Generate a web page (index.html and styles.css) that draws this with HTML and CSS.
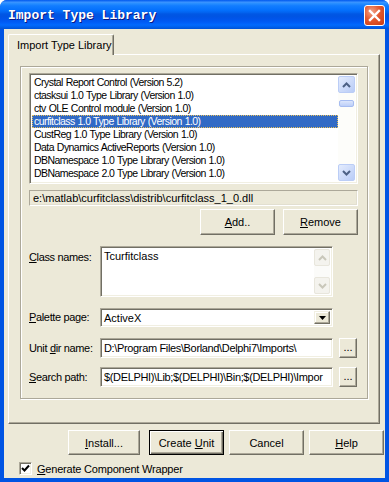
FILE: index.html
```html
<!doctype html>
<html lang="en">
<head>
<meta charset="utf-8">
<title>Import Type Library</title>
<link rel="stylesheet" href="styles.css">
</head>
<body>

<div class="window">

	<div class="titlebar">
		<span class="title">Import Type Library</span>
		<span class="close">
			<svg width="13" height="13" viewBox="0 0 13 13"><path d="M2 2 L11 11 M11 2 L2 11" stroke="#fff" stroke-width="2.4" stroke-linecap="square" /></svg>
		</span>
	</div>

	<div class="client">

		<div class="tabs">
			<div class="tab">Import Type Library</div>
		</div>

		<div class="page">
			<div class="group">

				<div class="list">
					<div class="items">
						<div class="item">Crystal Report Control (Version 5.2)</div>
						<div class="item">ctasksui 1.0 Type Library (Version 1.0)</div>
						<div class="item">ctv OLE Control module (Version 1.0)</div>
						<div class="item selected">curfitclass 1.0 Type Library (Version 1.0)</div>
						<div class="item">CustReg 1.0 Type Library (Version 1.0)</div>
						<div class="item">Data Dynamics ActiveReports (Version 1.0)</div>
						<div class="item">DBNamespace 1.0 Type Library (Version 1.0)</div>
						<div class="item">DBNamespace 2.0 Type Library (Version 1.0)</div>
						<div class="item">DBNamespace 3.0 Type Library (Version 1.0)</div>
					</div>
					<div class="vscroll">
						<div class="sbtn">
							<svg width="9" height="6" viewBox="0 0 9 6"><path d="M1 5 L4.5 1.5 L8 5" fill="none" stroke="#4D6185" stroke-width="2" /></svg>
						</div>
						<div class="track"><div class="thumb"></div></div>
						<div class="sbtn">
							<svg width="9" height="6" viewBox="0 0 9 6"><path d="M1 1 L4.5 4.5 L8 1" fill="none" stroke="#4D6185" stroke-width="2" /></svg>
						</div>
					</div>
				</div>

				<div class="pathbox">e:\matlab\curfitclass\distrib\curfitclass_1_0.dll</div>

				<div class="btnrow">
					<div class="btn"><span><u>A</u>dd..</span></div>
					<div class="btn"><span><u>R</u>emove</span></div>
				</div>

				<div class="row row-memo">
					<div class="lbl"><u>C</u>lass names:</div>
					<div class="memo">
						<div class="memo-text">Tcurfitclass</div>
						<div class="vscroll off">
							<div class="sbtn">
								<svg width="9" height="6" viewBox="0 0 9 6"><path d="M1 5 L4.5 1.5 L8 5" fill="none" stroke="#C9C7BA" stroke-width="2" /></svg>
							</div>
							<div class="track"></div>
							<div class="sbtn">
								<svg width="9" height="6" viewBox="0 0 9 6"><path d="M1 1 L4.5 4.5 L8 1" fill="none" stroke="#C9C7BA" stroke-width="2" /></svg>
							</div>
						</div>
					</div>
				</div>

				<div class="row row-combo">
					<div class="lbl"><u>P</u>alette page:</div>
					<div class="combo">
						<div class="combo-text">ActiveX</div>
						<div class="combo-btn">
							<svg width="7" height="4" viewBox="0 0 7 4"><path d="M0 0 H7 L3.5 4 Z" fill="#000" /></svg>
						</div>
					</div>
				</div>

				<div class="row row-edit">
					<div class="lbl">Unit <u>d</u>ir name:</div>
					<div class="edit">D:\Program Files\Borland\Delphi7\Imports\</div>
					<div class="btn dots">...</div>
				</div>

				<div class="row row-edit row-last">
					<div class="lbl"><u>S</u>earch path:</div>
					<div class="edit">$(DELPHI)\Lib;$(DELPHI)\Bin;$(DELPHI)\Impor</div>
					<div class="btn dots">...</div>
				</div>

			</div>
		</div>

		<div class="footer">
			<div class="btn btn-install"><span><u>I</u>nstall...</span></div>
			<div class="btn default"><span>Create <u>U</u>nit</span></div>
			<div class="btn"><span>Cancel</span></div>
			<div class="btn"><span><u>H</u>elp</span></div>
		</div>

		<div class="check">
			<span class="box">
				<svg width="9" height="9" viewBox="0 0 9 9"><path d="M1 4 L3.5 6.5 L8 1.5" fill="none" stroke="#000" stroke-width="2" /></svg>
			</span>
			<span class="check-text"><u>G</u>enerate Component Wrapper</span>
		</div>

	</div>

</div>

</body>
</html>
```

FILE: styles.css
```css
* { box-sizing: border-box; }

body { margin: 0; background: #fff; font: 11px "Liberation Sans", Arial, sans-serif; color: #000; }

u { text-decoration: underline; text-underline-offset: 1px; }

.window { width: 389px; height: 482px; display: flex; flex-direction: column;
	background: #0054E3; border-radius: 7px 7px 0 0; overflow: hidden; }

/* title bar */

.titlebar { height: 29px; flex: none; display: flex; align-items: center; justify-content: space-between;
	padding: 0 4px 0 8px;
	background: linear-gradient( to bottom, #0058EE 0%, #3A93FF 8%, #288EFF 12%, #127DFF 20%, #036FFC 36%,
		#0262EE 44%, #0057E5 48%, #0054E3 56%, #0055EB 66%, #005BF5 76%, #026AFE 86%, #0062EF 92%, #0052D6 100% ); }

.title { font: bold 13px "Liberation Mono", "Courier New", monospace; color: #fff; text-shadow: 1px 1px #0A1883;
	padding-top: 1px; }

.close { width: 21px; height: 21px; border: 1px solid #fff; border-radius: 3px; display: flex;
	align-items: center; justify-content: center; margin-top: 1px;
	background: radial-gradient( circle at 35% 30%, #F2A48A 0%, #E2582F 45%, #C83A12 100% ); }

/* client area */

.client { flex: 1; margin: 0 4px 4px; background: #ECE9D8; padding: 5px 0 0 4px;
	display: flex; flex-direction: column; }

.tabs { display: flex; height: 20px; position: relative; z-index: 1; }

.tab { width: 106px; height: 21px; padding: 4px 0 0 8px; background: #ECE9D8;
	border-top: 1px solid #fff; border-left: 1px solid #fff; border-right: 1px solid #716F64;
	box-shadow: inset -1px 0 #ACA899; border-radius: 2px 2px 0 0; }

.page { width: 372px; height: 370px; border: 1px solid; border-color: #fff #716F64 #716F64 #fff;
	box-shadow: inset -1px -1px #ACA899; padding: 11px 0 0 11px; }

.group { width: 348px; height: 333px; border: 1px solid #ACA899; box-shadow: inset 1px 1px #fff, 1px 1px #fff;
	padding: 6px 0 0 8px; display: flex; flex-direction: column; }

/* sunken 3d edge */

.list, .memo, .combo, .edit { border: 1px solid; border-color: #ACA899 #fff #fff #ACA899;
	box-shadow: inset 1px 1px #716F64, inset -1px -1px #F1EFE2; background: #fff; }

.list { width: 329px; height: 111px; padding: 2px 2px 2px 2px; display: flex; overflow: hidden; }

.items { flex: 1; overflow: hidden; }

.item { height: 13px; line-height: 13px; padding-left: 2px; white-space: nowrap;
	font-size: 10.5px; letter-spacing: -0.55px; word-spacing: 0.5px; }

.item.selected { background: #316AC5; color: #fff; outline: 1px dotted #E8C05A; outline-offset: -1px; }

.vscroll { width: 17px; flex: none; display: flex; flex-direction: column; background: #FDFDFA; }

.sbtn { height: 17px; flex: none; display: flex; align-items: center; justify-content: center;
	border: 1px solid #BBCDF6; border-radius: 2px; background: linear-gradient( to bottom right, #E4ECFD, #B9CCF7 ); }

.track { flex: 1; padding-top: 7px; }

.thumb { height: 7px; margin: 0 1px; border: 1px solid #A6BCF1; border-radius: 2px;
	background: linear-gradient( to bottom, #DCE6FC, #BCCEF8 ); }

.vscroll.off { background: #FBFBF9; }
.vscroll.off .sbtn { border-color: #E8E6DC; background: #F4F3EE; }

.pathbox { width: 329px; height: 16px; margin-top: 6px; padding: 1px 0 0 3px; white-space: nowrap;
	border: 1px solid; border-color: #ACA899 #fff #fff #ACA899; box-shadow: inset -1px -1px #E2DFD0; }

/* buttons */

.btn { height: 25px; display: flex; align-items: center; justify-content: center; background: #ECE9D8;
	border: 1px solid; border-color: #fff #716F64 #716F64 #fff; box-shadow: inset -1px -1px #ACA899;
	white-space: nowrap; }

.btn.default { border-color: #000; box-shadow: inset 1px 1px #fff, inset -1px -1px #716F64, inset -2px -2px #ACA899; }

.btnrow { width: 329px; display: flex; justify-content: flex-end; gap: 8px; margin-top: 3px; }
.btnrow .btn { width: 75px; height: 26px; }

/* label rows */

.row { display: flex; margin-top: 11px; }

.lbl { width: 71px; flex: none; letter-spacing: -0.35px; white-space: nowrap; }

.row-memo .lbl { padding-top: 5px; }
.row-combo .lbl { padding-top: 3px; }
.row-edit .lbl { padding-top: 4px; }
.row-last { margin-top: 9px; }

.memo { width: 233px; height: 51px; display: flex; padding: 2px; }
.memo-text { flex: 1; padding: 1px 0 0 1px; }
.memo .vscroll { width: 16px; }

.combo { width: 233px; height: 19px; display: flex; padding: 2px; }
.combo-text { flex: 1; padding-left: 1px; line-height: 14px; }
.combo-btn { width: 16px; display: flex; align-items: center; justify-content: center; background: #ECE9D8;
	border: 1px solid; border-color: #F1EFE2 #716F64 #716F64 #F1EFE2; box-shadow: inset -1px -1px #ACA899, inset 1px 1px #fff; }

.edit { width: 233px; height: 20px; padding: 3px 0 0 3px; white-space: nowrap; overflow: hidden;
	letter-spacing: -0.35px; }

.btn.dots { width: 18px; height: 20px; margin-left: 6px; align-items: flex-end; padding-bottom: 4px; }

/* footer */

.footer { display: flex; justify-content: flex-end; gap: 5px; margin-top: 6px; width: 376px; }
.footer .btn { width: 75px; }
.footer .btn-install { width: 72px; margin-right: 4px; }

.check { display: flex; align-items: center; gap: 5px; margin: 7px 0 0 11px; }
.check-text { letter-spacing: -0.2px; }

.box { width: 13px; height: 13px; background: #fff; display: flex; align-items: center; justify-content: center;
	border: 1px solid; border-color: #ACA899 #fff #fff #ACA899; box-shadow: inset 1px 1px #716F64, inset -1px -1px #F1EFE2; }
```
